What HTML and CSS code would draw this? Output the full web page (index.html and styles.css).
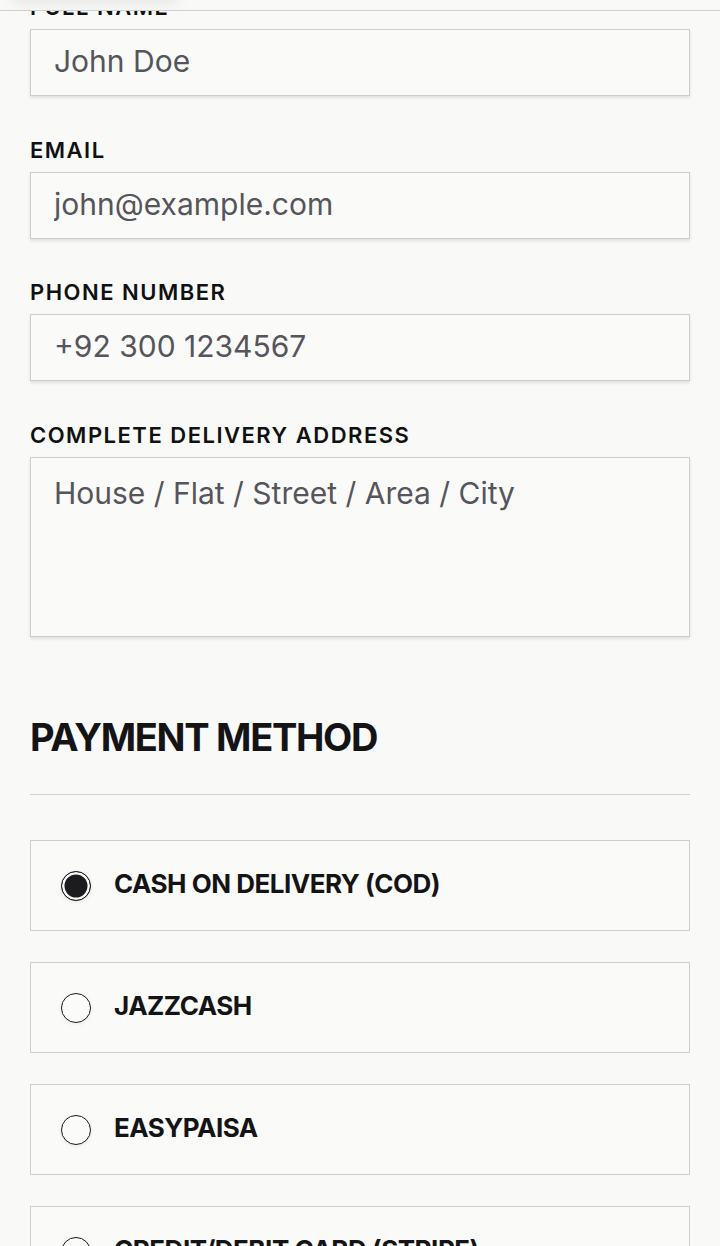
FILE: index.html
```html
<!DOCTYPE html>
<html lang="en">
<head>
<meta charset="utf-8">
<title>Checkout</title>
<link rel="stylesheet" href="styles.css">
</head>
<body>
<header class="topbar"><span class="topbar-glow"></span></header>
<main class="checkout">
  <div class="field">
    <label class="field-label" for="name">Full Name</label>
    <input class="field-input" id="name" type="text" placeholder="John Doe">
  </div>
  <div class="field">
    <label class="field-label" for="email">Email</label>
    <input class="field-input" id="email" type="email" placeholder="john@example.com">
  </div>
  <div class="field">
    <label class="field-label" for="phone">Phone Number</label>
    <input class="field-input" id="phone" type="tel" placeholder="+92 300 1234567">
  </div>
  <div class="field">
    <label class="field-label" for="address">Complete Delivery Address</label>
    <textarea class="field-input field-area" id="address" placeholder="House / Flat / Street / Area / City"></textarea>
  </div>

  <h2 class="section-title">Payment Method</h2>

  <div class="pay-list">
    <label class="pay-option">
      <input class="pay-radio" type="radio" name="pay" checked>
      <span class="pay-name">Cash on Delivery (COD)</span>
    </label>
    <label class="pay-option">
      <input class="pay-radio" type="radio" name="pay">
      <span class="pay-name">JazzCash</span>
    </label>
    <label class="pay-option">
      <input class="pay-radio" type="radio" name="pay">
      <span class="pay-name">EasyPaisa</span>
    </label>
    <label class="pay-option">
      <input class="pay-radio" type="radio" name="pay">
      <span class="pay-name">Credit/Debit Card (Stripe)</span>
    </label>
  </div>
</main>
</body>
</html>
```
FILE: styles.css
```css
* { box-sizing: border-box; }

html, body {
  margin: 0;
  padding: 0;
  background: #f9f9f7;
  font-family: Inter, "Noto Sans", sans-serif;
  color: #141416;
}

body { overflow: hidden; height: 1246px; }

.topbar {
  position: fixed;
  top: 0;
  left: 0;
  right: 0;
  height: 11px;
  background: #f9f9f8;
  border-bottom: 1px solid #cfcfcf;
  z-index: 10;
  overflow: hidden;
}

.topbar-glow {
  position: absolute;
  left: 10px;
  top: -14px;
  width: 170px;
  height: 20px;
  border-radius: 10px;
  background: rgba(0, 0, 0, 0.06);
  filter: blur(6px);
}

.checkout {
  padding: 0 30px;
  margin-top: -6px;
}

.field { margin-bottom: 40.5px; }

.field-label {
  display: block;
  font-size: 22px;
  line-height: 26px;
  font-weight: 600;
  letter-spacing: 1.5px;
  text-transform: uppercase;
  color: #111113;
  margin-bottom: 9px;
}

.field-input {
  display: block;
  width: 100%;
  height: 67px;
  margin: 0;
  padding: 0 23px 3px;
  border: 1px solid #cdcdcd;
  border-radius: 0;
  background: #fafaf9;
  box-shadow: 0 2px 3px rgba(0, 0, 0, 0.10);
  font-family: Inter, "Noto Sans", sans-serif;
  font-size: 30px;
  color: #4f4f55;
  outline: none;
}

.field-input::placeholder { color: #55555b; opacity: 1; }

.field-area {
  height: 180px;
  padding-top: 16px;
  resize: none;
  line-height: 38px;
}

.section-title {
  margin: 77px 0 0;
  padding-bottom: 34.5px;
  border-bottom: 1px solid #d2d2d2;
  font-size: 38px;
  line-height: 46px;
  font-weight: 700;
  letter-spacing: -1.3px;
  text-transform: uppercase;
  color: #141416;
}

.pay-list {
  display: flex;
  flex-direction: column;
  gap: 31px;
  margin-top: 45px;
}

.pay-option {
  display: flex;
  align-items: center;
  gap: 23px;
  height: 91px;
  padding: 0 30px;
  border: 1px solid #cdcdcd;
  background: #fafaf9;
}

.pay-radio {
  appearance: none;
  -webkit-appearance: none;
  flex: 0 0 30px;
  width: 30px;
  height: 30px;
  margin: 0;
  border: 1.5px solid #1a1a1a;
  border-radius: 50%;
  background: #fbfbfa;
  box-shadow: 0 1px 4px rgba(0, 0, 0, 0.08);
}

.pay-radio:checked {
  background: #1c1c1f;
  box-shadow: inset 0 0 0 2.5px #fbfbfa, 0 1px 4px rgba(0, 0, 0, 0.08);
}

.pay-name {
  font-size: 26px;
  line-height: 30px;
  font-weight: 700;
  letter-spacing: -0.5px;
  text-transform: uppercase;
  color: #141416;
  margin-top: -3px;
}
```
